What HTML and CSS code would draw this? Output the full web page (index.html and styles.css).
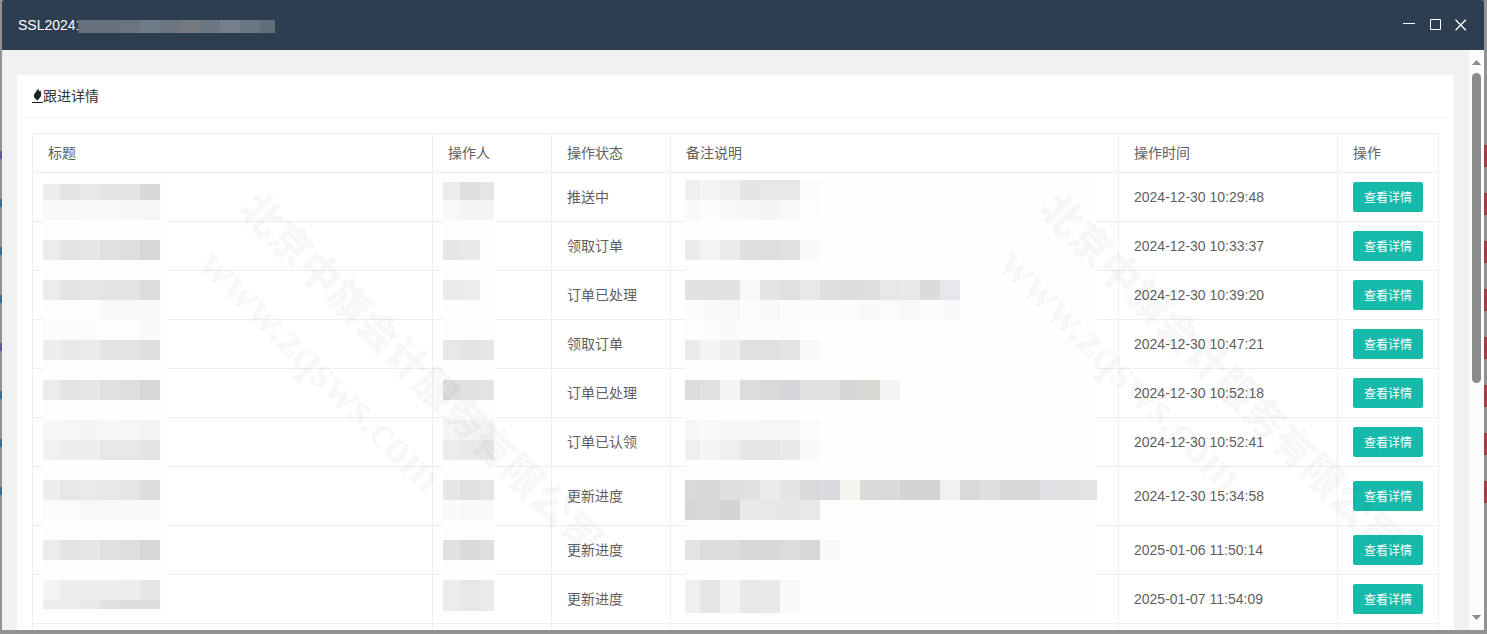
FILE: index.html
```html
<!DOCTYPE html>
<html lang="zh-CN">
<head>
    <meta charset="UTF-8">
    <meta name="viewport" content="width=device-width, initial-scale=1.0">
    <title>跟进详情</title>
    <link rel="stylesheet" href="styles.css">
</head>
<body>
    <!-- Dimmed page behind the window -->
    <div class="backdrop backdrop-left">
        <i></i><i></i><i></i><i></i><i></i><i></i><i></i><i></i>
    </div>
    <div class="backdrop backdrop-right">
        <i></i><i></i><i></i><i></i><i></i><i></i><i></i><i></i>
    </div>

    <div class="window">
        <div class="window-title">
            <span>SSL20241</span>
            <svg class="title-mosaic" width="197" height="13" data-mosaic="title"></svg>
            <div class="window-controls">
                <button type="button" aria-label="最小化">
                    <svg width="12" height="12" viewBox="0 0 12 12"><path d="M0 4.500h12"/></svg>
                </button>
                <button type="button" aria-label="最大化">
                    <svg width="12" height="12" viewBox="0 0 12 12"><path d="M1.500 .5h10v10h-10z"/></svg>
                </button>
                <button type="button" aria-label="关闭">
                    <svg width="12" height="12" viewBox="0 0 12 12"><path stroke-width="1.300" d="M.5.8l10.400 10.400M10.900.8L.5 11.200"/></svg>
                </button>
            </div>
        </div>

        <div class="window-body">
            <div class="content">
                <div class="card">
                    <div class="card-header">
                        <svg class="fire" width="11" height="16" viewBox="0 0 11 16">
                            <path d="M6.500.5C6.300 1.800 6.600 2.600 7.400 3.200l1-.9C8.300 3.700 9.600 4.800 9.200 7c-.4 2.200-1.900 3.600-4 5.600C4.400 11.300 2.200 10.700 1.900 8.300 1.600 5.800 3 5.300 3.900 3.900 4.600 2.800 5.300 1.500 6.500.5z"/>
                            <path d="M0 14h11v1H0z"/>
                        </svg>
                        <span>跟进详情</span>
                    </div>
                    <div class="card-body">
                        <table>
                            <colgroup>
                                <col class="col-title">
                                <col class="col-user">
                                <col class="col-status">
                                <col>
                                <col class="col-time">
                                <col class="col-action">
                            </colgroup>
                            <thead>
                                <tr>
                                    <th>标题</th>
                                    <th>操作人</th>
                                    <th>操作状态</th>
                                    <th>备注说明</th>
                                    <th>操作时间</th>
                                    <th>操作</th>
                                </tr>
                            </thead>
                            <tbody>
                                <tr>
                                    <td><svg class="mosaic" width="125" height="440" data-mosaic="name"></svg></td>
                                    <td><svg class="mosaic" width="53" height="440" data-mosaic="user"></svg></td>
                                    <td>推送中</td>
                                    <td><svg class="mosaic mosaic-remark" width="412" height="440" data-mosaic="remark"></svg></td>
                                    <td>2024-12-30 10:29:48</td>
                                    <td><button type="button" class="btn">查看详情</button></td>
                                </tr>
                                <tr>
                                    <td></td>
                                    <td></td>
                                    <td>领取订单</td>
                                    <td></td>
                                    <td>2024-12-30 10:33:37</td>
                                    <td><button type="button" class="btn">查看详情</button></td>
                                </tr>
                                <tr>
                                    <td></td>
                                    <td></td>
                                    <td>订单已处理</td>
                                    <td></td>
                                    <td>2024-12-30 10:39:20</td>
                                    <td><button type="button" class="btn">查看详情</button></td>
                                </tr>
                                <tr>
                                    <td></td>
                                    <td></td>
                                    <td>领取订单</td>
                                    <td></td>
                                    <td>2024-12-30 10:47:21</td>
                                    <td><button type="button" class="btn">查看详情</button></td>
                                </tr>
                                <tr>
                                    <td></td>
                                    <td></td>
                                    <td>订单已处理</td>
                                    <td></td>
                                    <td>2024-12-30 10:52:18</td>
                                    <td><button type="button" class="btn">查看详情</button></td>
                                </tr>
                                <tr>
                                    <td></td>
                                    <td></td>
                                    <td>订单已认领</td>
                                    <td></td>
                                    <td>2024-12-30 10:52:41</td>
                                    <td><button type="button" class="btn">查看详情</button></td>
                                </tr>
                                <tr class="two-lines">
                                    <td></td>
                                    <td></td>
                                    <td>更新进度</td>
                                    <td></td>
                                    <td>2024-12-30 15:34:58</td>
                                    <td><button type="button" class="btn">查看详情</button></td>
                                </tr>
                                <tr>
                                    <td></td>
                                    <td></td>
                                    <td>更新进度</td>
                                    <td></td>
                                    <td>2025-01-06 11:50:14</td>
                                    <td><button type="button" class="btn">查看详情</button></td>
                                </tr>
                                <tr>
                                    <td></td>
                                    <td></td>
                                    <td>更新进度</td>
                                    <td></td>
                                    <td>2025-01-07 11:54:09</td>
                                    <td><button type="button" class="btn">查看详情</button></td>
                                </tr>
                                <tr>
                                    <td></td>
                                    <td></td>
                                    <td></td>
                                    <td></td>
                                    <td></td>
                                    <td></td>
                                </tr>
                            </tbody>
                        </table>
                    </div>
                </div>
            </div>

            <div class="scrollbar">
                <svg width="9" height="5" viewBox="0 0 9 5"><path d="M0 5L4.500 0 9 5z"/></svg>
                <div class="scrollbar-track"><div class="scrollbar-thumb"></div></div>
                <svg width="9" height="5" viewBox="0 0 9 5"><path d="M0 0h9L4.500 5z"/></svg>
            </div>
        </div>
    </div>

    <!-- Watermark -->
    <div class="watermark" aria-hidden="true">
        <svg width="800" height="634">
            <text class="wm-name" transform="translate(237 211) rotate(45)">北京中旗会计服务有限公司</text>
            <text class="wm-url" transform="translate(196 266) rotate(45)">www.zqsws.com</text>
        </svg>
        <svg width="800" height="634">
            <text class="wm-name" transform="translate(237 211) rotate(45)">北京中旗会计服务有限公司</text>
            <text class="wm-url" transform="translate(196 266) rotate(45)">www.zqsws.com</text>
        </svg>
    </div>

    <script src="app.js"></script>
</body>
</html>
```
FILE: styles.css
```css
/* Base styles */
* {
    box-sizing: border-box;
}

body {
    margin: 0;
    height: 100vh;
    padding: 0 3px 4px 2px;
    overflow: hidden;
    background: #929292;
    color: #5f5f5f;
    font: 14px/20px "Liberation Sans", "Noto Sans CJK SC", sans-serif;
}

button {
    border: none;
    padding: 0;
    background: none;
    font-family: inherit;
    cursor: pointer;
}

/* Page behind the window */
.backdrop {
    position: absolute;
    top: 145px;
    display: flex;
    flex-direction: column;
    gap: 26px;
}

.backdrop i {
    width: 3px;
    height: 22px;
}

.backdrop-left {
    left: 0;
    top: 151px;
    gap: 40px;
}

.backdrop-left i {
    width: 2px;
    height: 8px;
    background: #3c6f90;
}

.backdrop-left i:nth-child(4n + 1) {
    background: #5a5a9a;
}

.backdrop-right {
    right: 0;
}

.backdrop-right i {
    background: #9c3f44;
}

/* Window */
.window {
    position: relative;
    display: flex;
    flex-direction: column;
    height: 100%;
    border-radius: 2px 2px 0 0;
    overflow: hidden;
    background: #f1f1f1;
}

.window-title {
    display: flex;
    align-items: center;
    flex: none;
    height: 50px;
    padding: 0 17px 0 16px;
    background: #2d3e50;
    color: #fff;
}

.title-mosaic {
    margin: 2px 0 0 -5px;
}

.window-controls {
    display: flex;
    gap: 14px;
    margin-left: auto;
}

.window-controls button {
    height: 12px;
}

.window-controls svg {
    display: block;
    fill: none;
    stroke: #fff;
}

.window-body {
    display: flex;
    flex: 1;
    min-height: 0;
}

.content {
    flex: 1;
    padding: 25px 15px 0;
    overflow: hidden;
}

/* Card */
.card {
    background: #fff;
}

.card-header {
    display: flex;
    align-items: center;
    height: 43px;
    padding: 0 15px;
    border-bottom: 1px solid #f6f6f6;
    color: #333;
}

.fire {
    fill: #222;
}

.card-body {
    padding: 15px;
}

/* Table */
table {
    width: 100%;
    table-layout: fixed;
    border-collapse: collapse;
}

.col-title {
    width: 400px;
}

.col-user,
.col-status {
    width: 119px;
}

.col-time {
    width: 219px;
}

.col-action {
    width: 101px;
}

th,
td {
    position: relative;
    padding: 9px 15px;
    border: 1px solid #eee;
    font-weight: 400;
    text-align: left;
}

td {
    height: 49px;
}

.two-lines td {
    height: 59px;
}

.btn {
    display: block;
    height: 30px;
    padding: 0 11px;
    border-radius: 2px;
    background: #16baaa;
    color: #fff;
    font-size: 12px;
    line-height: 32px;
    white-space: nowrap;
}

/* Mosaics lie over the rows below the first one */
.mosaic {
    position: absolute;
    z-index: 1;
    top: 7px;
    left: 10px;
    background: #fefefe;
}

.mosaic-remark {
    left: 14px;
}

/* Scrollbar */
.scrollbar {
    display: flex;
    flex-direction: column;
    align-items: center;
    width: 15px;
    padding: 10px 0;
    background: #fcfcfc;
}

.scrollbar svg {
    flex: none;
    fill: #8a8a8a;
}

.scrollbar-track {
    flex: 1;
    width: 9px;
    min-height: 0;
    padding: 8px 0;
}

.scrollbar-thumb {
    height: 58%;
    border-radius: 5px;
    background: #8b8b8b;
}

/* Watermark */
.watermark {
    position: absolute;
    inset: 0;
    z-index: 2;
    display: flex;
    overflow: hidden;
    pointer-events: none;
}

.watermark svg {
    flex: none;
    fill: rgba(0, 0, 0, 0.05);
}

.wm-name {
    font: 900 41px "Liberation Serif", "Noto Sans CJK SC", serif;
    stroke: rgba(0, 0, 0, 0.02);
}

.wm-url {
    font: bold 47px "Liberation Serif", serif;
}
```
FILE: app.js
```js
// Each row: top, height, then one grey per 20px block (first block is narrower)
const mosaics = {
    title: {
        first: 2,
        rows: [
            [0, 13, '#5f6c7a #66717d #66717c #6a747f #717c89 #6c7681 #76797f #6c7784 #75808c #6c7784 #616d79']
        ]
    },
    name: {
        first: 17,
        rows: [
            [4, 16, '#eeeeec #e4e4e4 #e7e9e7 #e5e3e1 #e3e4e3 #d8d8d8'],
            [20, 20, '#fafafa #fafafa #f9f9f9 #f8f8f8 #f7f7f7 #f6f6f6'],
            [60, 20, '#ececec #e4e4e4 #e5e7e5 #e2e0df #dddee0 #d7d9d8'],
            [100, 20, '#ececec #e4e4e4 #e5e7e5 #e4e4e2 #e3e4e3 #dbdddc'],
            [120, 20, '#fefefe #fefefe #fefefe #f9f9f9 #f9f9f9 #f9f9f9'],
            [140, 20, '#fbfcfb #fbfcfb #fbfcfb #fefefe #fefefe #f9f9f9'],
            [160, 20, '#eeeeec #e8eae9 #eaeaea #e4e4e4 #e3e3e3 #dedede'],
            [200, 20, '#ececec #e4e4e4 #e5e7e5 #e2e0df #dddee0 #d7d9d8'],
            [240, 20, '#f7f7f7 #f6f6f6 #f5f5f5 #f7f7f5 #f6f6f6 #f2f4f3'],
            [260, 20, '#f1f1f1 #eeeeee #eeeeee #e7e7e7 #e6e7e6 #e4e4e4'],
            [300, 20, '#eeeeec #e6e8e7 #eaeaea #e8e8e8 #e5e5e5 #dcdedd'],
            [320, 20, '#fbfbfb #fbfbfb #f8f8f8 #f8f8f8 #f8f8f8 #f9f9f9'],
            [360, 20, '#ececec #e4e4e4 #e5e7e5 #e2e0df #dddee0 #d7d9d8'],
            [400, 20, '#f4f4f4 #eeeeee #eeeeee #efeeec #ededed #e6e6e6'],
            [420, 9, '#ededed #ededed #e9e9e9 #e1e1e1 #dcdddc #dcdddc']
        ]
    },
    user: {
        first: 17,
        rows: [
            [2, 18, '#edecea #dfddde #e4e5e6'],
            [20, 20, '#f7f8f7 #f3f4f4 #f3f4f4'],
            [60, 20, '#e6e6e6 #e9e9e9'],
            [100, 20, '#eaeae9 #ececec'],
            [160, 20, '#e8e7e5 #e3e3e3 #e6e6e6'],
            [200, 20, '#dfdedd #e1e2e1 #e2e3e4'],
            [240, 20, '#f5f5f4 #f3f3f2 #f3f3f3'],
            [260, 20, '#edecea #eae9e8 #e7e8ea'],
            [300, 20, '#e6e6e6 #e0e0de #e4e5e7'],
            [320, 20, '#fafaf9 #f9f9f9 #fafafa'],
            [360, 20, '#e1e1df #dcdbd9 #dedfe1'],
            [400, 31, '#ececea #e7e7e7 #e9eaeb']
        ]
    },
    remark: {
        first: 15,
        rows: [
            [0, 20, '#efefef #f4f4f4 #efefef #e4e4e4 #e7e7e7 #e7e7e7 #fafbfa'],
            [20, 20, '#f9f9f9 #fcfcfa #f8f8f6 #f7f7f7 #f5f5f5 #f9f9f9 #fdfdfd'],
            [60, 20, '#eaeaea #f3f3f3 #ebebeb #dfdfdf #dedede #e1e1e1 #f8f9f8'],
            [100, 20, '#e2e2e2 #e0e0de #e2e2e2 #f8f8f8 #e4e5e3 #dfe1e0 #e8e8e6 #dfdfdf #dcdcdc #dedede #e7e7e7 #e9e9e9 #dbdbdb #e6e7ea'],
            [120, 20, '#fcfcfc #fafafa #f8f8f8 #fcfcfc #f8f8f8 #fcfcfc #fcfcfc #fbfbfa #fbfbfb #f9f9f9 #fbfbfb #f9f9f9 #fcfcfc #fafafa'],
            [140, 20, '#fdfdfd #fcfcfc #fafafa #fcfcfc #fcfcfc #fcfcfc'],
            [160, 20, '#eaeaea #f4f4f4 #eeeeec #e1e1e1 #e0e0de #e4e4e4 #f9faf9'],
            [200, 20, '#dcdcdc #e0e0e0 #f5f5f5 #dcdcdc #dbdad9 #d4d6d9 #dfe1e0 #e0e1e1 #d6d6d5 #d8d7d4 #f3f4f6'],
            [240, 20, '#f6f6f6 #fafaf8 #f7f7f7 #f7f7f7 #f6f6f5 #f6f6f6 #fbfbfb'],
            [260, 20, '#efefef #f5f5f5 #efefef #e6e6e6 #e5e5e5 #e9e9e9 #f9f9f9'],
            [300, 20, '#d9d9d9 #d8d8d6 #dfdfdf #e1e1e1 #eaeceb #e4e5e2 #dadadb #dadbde #f4f4f1 #dbdbda #dadada #d3d4d5 #d3d4d6 #f0f0f0 #d7dad8 #dfe0dd #d8d8d7 #d7d7d7 #e0e2e5 #e0e0e0 #e4e4e5'],
            [320, 20, '#d6d6d6 #d8d8d6 #d4d4d4 #e8eae9 #e6e7e6 #e4e7e5 #e8e8e8'],
            [360, 20, '#e3e3e3 #dddddd #dddddc #d8d8d8 #d9d8d6 #dcdcdc #d7d7d7 #fafafa'],
            [400, 33, '#efefef #e5e5e5 #f3f4f4 #e8e8e6 #e8e9e8 #fafafa']
        ]
    }
};

document.querySelectorAll('[data-mosaic]').forEach(svg => {
    const { first, rows } = mosaics[svg.dataset.mosaic];
    rows.forEach(([y, height, colors]) => {
        colors.split(' ').forEach((color, i) => {
            const rect = document.createElementNS('http://www.w3.org/2000/svg', 'rect');
            rect.setAttribute('x', i === 0 ? 0 : first + (i - 1) * 20);
            rect.setAttribute('y', y);
            // the last user block is cut at the edge of the column text
            const last = svg.dataset.mosaic === 'user' && i === 2;
            rect.setAttribute('width', i === 0 ? first : last ? 14 : 20);
            rect.setAttribute('height', height);
            rect.setAttribute('fill', color);
            svg.appendChild(rect);
        });
    });
});
```
